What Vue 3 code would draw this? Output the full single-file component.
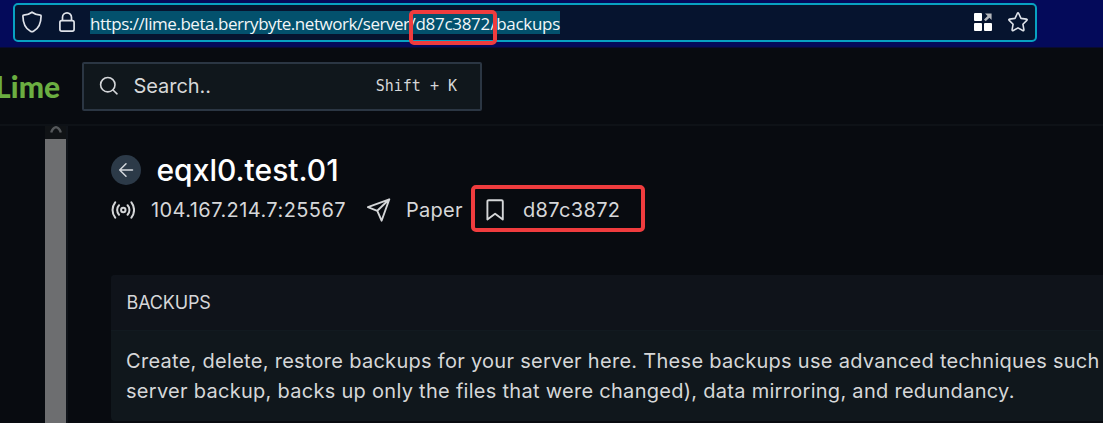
<script setup>
const url = [
  { text: 'https://lime.beta.berrybyte.network/server/', cls: 'u1' },
  { text: 'd87c3872', cls: 'u2' },
  { text: '/backups', cls: 'u3' },
]
</script>

<template>
  <div class="screen">
    <div class="browser">
      <div class="address">
        <svg class="shield" width="20" height="22" viewBox="0 0 20 22" fill="none" stroke="#dfe3ea" stroke-width="1.7" stroke-linejoin="round">
          <path d="M10 1.2C7.6 3 4.7 4 1.5 4.2c-.4 0-.6.3-.6.7C1 12.600 3.600 17.600 8.500 20.200c1 .55 2 .55 3 0 4.900-2.600 7.500-7.600 7.600-15.300 0-.4-.2-.7-.6-.7C15.300 4 12.400 3 10 1.200z" />
        </svg>
        <svg class="lock" width="16" height="20" viewBox="0 0 16 20" fill="none" stroke="#dfe3ea" stroke-width="1.7">
          <rect x="0.9" y="8.700" width="14.200" height="10.400" rx="1.800" />
          <path d="M3.500 8.700V5.400a4.500 4.500 0 0 1 9 0v3.300" />
        </svg>
        <div class="url"><span v-for="part in url" :key="part.cls" :class="part.cls">{{ part.text }}</span></div>
        <svg class="apps" width="18" height="18" viewBox="0 0 18 18">
          <g fill="#fff">
            <rect width="8" height="8" rx="1" />
            <rect y="10" width="8" height="8" rx="1" />
            <rect x="10" y="10" width="8" height="8" rx="1" />
          </g>
          <path d="M11 .4h6.600V7l-2.200-2.200-3.700 3.500-1.700-1.700 3.600-3.700z" fill="#b4b7bc" />
        </svg>
        <svg class="star" width="20" height="20" viewBox="0 0 20 20" fill="none" stroke="#dfe3ea" stroke-width="1.600" stroke-linejoin="round">
          <path d="M9.300 1.500q.7-1.200 1.400 0l2.300 4.900 5.400.7q1.300.3.400 1.300l-3.900 3.800 1 5.500q0 1.300-1.200.8L10 15.900l-4.700 2.600q-1.200.5-1.200-.8l1-5.500L1.200 8.400q-.9-1 .4-1.300L7 6.400z" />
        </svg>
      </div>
    </div>

    <header class="topbar">
      <div class="brand">Lime</div>
      <div class="search">
        <svg width="20" height="20" viewBox="0 0 20 20" fill="none" stroke="#d4d6d9" stroke-width="1.600" stroke-linecap="round">
          <circle cx="8.800" cy="8.700" r="7.200" />
          <path d="M14 14l4 3.800" />
        </svg>
        <span class="placeholder">Search..</span>
        <kbd>Shift + K</kbd>
      </div>
    </header>

    <div class="body">
      <aside class="side"></aside>
      <div class="scroll">
        <div class="up">
          <svg width="12" height="8" viewBox="0 0 12 8" fill="none" stroke="#55585b" stroke-width="2.400"><path d="M1.200 6.500C2 4 4 1.700 6 1.200 8 1.700 10 4 10.800 6.500" /></svg>
        </div>
        <div class="thumb"></div>
      </div>

      <main class="main">
        <div class="title-row">
          <div class="back">
            <svg width="16" height="16" viewBox="0 0 16 16" fill="none" stroke="#d3d7dc" stroke-width="1.500" stroke-linecap="round" stroke-linejoin="round"><path d="M14.500 8H1.700M8 1.700L1.700 8 8 14.300" /></svg>
          </div>
          <h1>eqxl0.test.01</h1>
        </div>
        <div class="meta">
          <svg class="radio" width="24" height="24" viewBox="0 0 24 24" fill="none" stroke="#d4d6d8" stroke-width="2" stroke-linecap="round">
            <circle cx="12.300" cy="12" r="2.200" />
            <path d="M8 7.300a6.900 6.900 0 0 0 0 9.400M16.600 7.300a6.900 6.900 0 0 1 0 9.400M4.200 4.300a12.500 12.500 0 0 0 0 15.400M20.400 4.300a12.500 12.500 0 0 1 0 15.400" />
          </svg>
          <span class="ip">104.167.214.7:25567</span>
          <svg class="send" width="24" height="24" viewBox="0 0 24 24" fill="none" stroke="#d4d6d8" stroke-width="1.900" stroke-linejoin="round">
            <path d="M22.300 1.300L.9 9.200l9.400 3.600 4.300 9.900zM22.300 1.300l-12 11.500" />
          </svg>
          <span class="type">Paper</span>
          <svg class="mark" width="18" height="22" viewBox="0 0 18 22" fill="none" stroke="#d4d6d8" stroke-width="1.900" stroke-linejoin="round">
            <path d="M1.400 20.500V2.500q0-1.300 1.300-1.300h12.800q1.300 0 1.300 1.300v18L9.100 14.800z" />
          </svg>
          <span class="sid">d87c3872</span>
        </div>

        <section class="card">
          <h2>BACKUPS</h2>
          <div class="copy">
            <p>Create, delete, restore backups for your server here. These backups use advanced techniques such</p>
            <p>server backup, backs up only the files that were changed), data mirroring, and redundancy.</p>
          </div>
        </section>
      </main>
    </div>

    <div class="callout callout-url"></div>
    <div class="callout callout-id"></div>
  </div>
</template>

<style>
body { margin: 0; background: #080b10; overflow: hidden; }
</style>

<style scoped>
* { box-sizing: border-box; }
.screen { position: relative; width: 1103px; height: 423px; overflow: hidden; background: #080b10; color: #d6d7d9; font-family: Inter, "Liberation Sans", sans-serif; display: flex; flex-direction: column; }
svg { display: block; flex: none; }
span, h1, h2, p, kbd { white-space: nowrap; }
.browser { height: 48px; flex: none; background: #040a5a; padding: 3px 0 0 13px; border-bottom: 1px solid #090b31; }
.address { width: 1024px; height: 39px; border: 2px solid #08a2c2; border-radius: 5px; background: #06142f; display: flex; align-items: flex-start; padding-left: 7px; }
.shield { margin-top: 6px; }
.lock { margin: 7px 0 0 17px; }
.url { margin: 6px 0 0 15px; width: 470px; height: 23px; line-height: 25px; background: #03516d; color: #f2f6f8; font-family: "Open Sans", "Noto Sans", sans-serif; font-size: 17px; display: flex; }
.u1 { width: 326px; letter-spacing: -0.455px; }
.u2 { width: 75px; letter-spacing: -0.3px; }
.u3 { letter-spacing: -0.3px; }
.apps { margin: 8px 0 0 414px; }
.star { margin: 7px 0 0 16px; }
.topbar { height: 78px; flex: none; display: flex; border-bottom: 2px solid #0e1217; }
.brand { flex: none; width: 84px; margin-left: -5px; padding-top: 20px; line-height: 36px; font-family: Lato, Inter, sans-serif; font-size: 30px; font-weight: 900; letter-spacing: .1px; color: #6bae41; }
.search { flex: none; margin: 14px 0 0 3px; width: 400px; height: 49px; border: 2px solid #2b3643; border-radius: 2px; background: #10171c; display: flex; align-items: center; padding: 0 23px 2px 15px; }
.placeholder { font-size: 20px; margin-left: 14.500px; letter-spacing: -.05px; }
kbd { margin-left: auto; font-family: "DejaVu Sans Mono", monospace; font-size: 15px; }
.body { flex: 1; min-height: 0; display: flex; }
.side { width: 45px; flex: none; }
.scroll { width: 23px; flex: none; border-right: 2px solid #10141a; display: flex; flex-direction: column; }
.up { height: 13px; background: #101316; padding-left: 5px; }
.thumb { flex: 1; background: #6d6e70; }
.main { width: 1035px; flex: none; padding: 29px 0 0 43px; }
.title-row { display: flex; align-items: center; height: 30px; }
.back { width: 30px; height: 30px; border-radius: 50%; background: #2c3a48; display: grid; place-items: center; }
h1 { margin: 0 0 0 15.500px; font-size: 30px; font-weight: 500; color: #fff; line-height: 30px; }
.meta { height: 30px; margin-top: 10px; display: flex; align-items: center; font-size: 20px; }
.ip { width: 195px; margin-left: 16px; letter-spacing: .43px; }
.send { margin-left: 21px; }
.type { width: 57px; margin-left: 15px; letter-spacing: .25px; }
.mark { margin-left: 23px; }
.sid { margin-left: 19px; letter-spacing: .35px; }
.card { margin-top: 50px; width: 1100px; height: 146px; border-radius: 4px; background: #10171c; overflow: hidden; }
h2 { margin: 0; height: 56px; line-height: 56px; padding-left: 15.500px; background: #0f131a; border-bottom: 1px solid #121a20; font-size: 18px; font-weight: 400; letter-spacing: -.15px; }
.copy { padding: 15px; font-size: 20px; line-height: 30px; }
p { margin: 0; letter-spacing: .285px; }
.callout { position: absolute; border: 4px solid #f03c3e; border-radius: 5px; }
.callout-url { left: 409px; top: 10px; width: 88px; height: 35px; }
.callout-id { left: 471px; top: 185px; width: 174px; height: 47px; }
</style>
